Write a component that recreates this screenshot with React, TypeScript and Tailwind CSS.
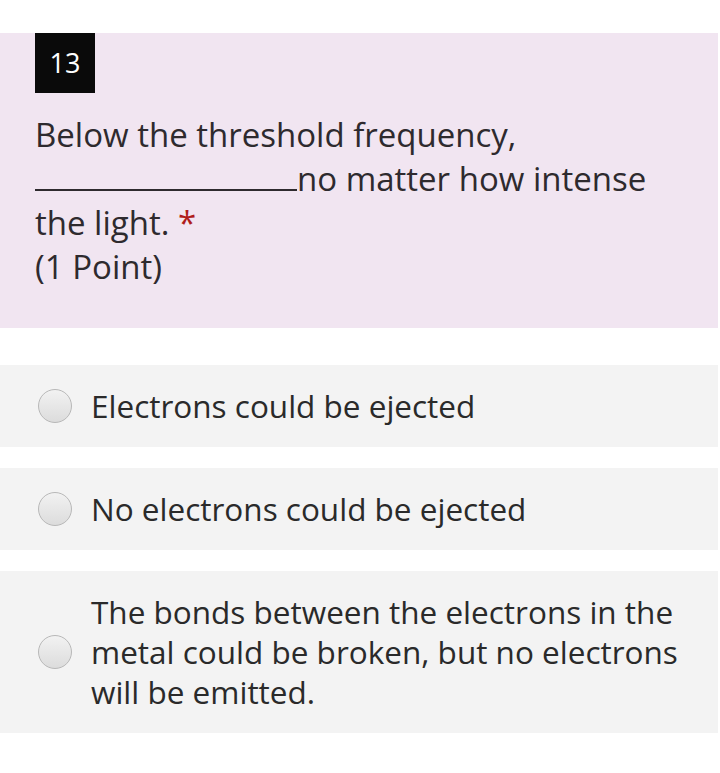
import React from "react";

const font = { fontFamily: '"Open Sans", "Noto Sans", sans-serif' };

function Radio() {
  return (
    <div className="w-[34px] h-[34px] shrink-0 rounded-full border border-[#b8b8b8] bg-gradient-to-b from-[#f2f2f2] to-[#dcdcdc]" />
  );
}

function Option({ children }: { children: React.ReactNode }) {
  return (
    <div className="flex items-center bg-[#f3f3f3] mr-[2px] pl-[38px] pr-4 py-[21px] gap-[19px]">
      <Radio />
      <div className="text-[31.5px] leading-[40px] text-[#2a2a2a] whitespace-nowrap">{children}</div>
    </div>
  );
}

export default function App() {
  return (
    <div className="bg-white w-[720px] h-[773px] pt-[33px]" style={font}>
      <div className="bg-[#f1e5f1] mr-[2px] h-[295px] pl-[35px] pr-4">
        <div className="w-[60px] h-[60px] bg-[#0a0a0a] text-white text-[27px] flex items-center justify-center">13</div>
        <div className="mt-[20px] text-[33px] leading-[44px] text-[#2e2a2e] whitespace-nowrap">
          <div>Below the threshold frequency,</div>
          <div>
            <span className="inline-block w-[262px] border-b-2 border-[#2e2a2e] align-baseline" style={{ height: 0 }} />
            no matter how intense
          </div>
          <div>
            the light. <span className="text-[#b01c1c]">*</span>
          </div>
          <div>(1 Point)</div>
        </div>
      </div>
      <div className="mt-[37px] flex flex-col gap-[21px]">
        <Option>Electrons could be ejected</Option>
        <Option>No electrons could be ejected</Option>
        <Option>
          The bonds between the electrons in the
          <br />
          metal could be broken, but no electrons
          <br />
          will be emitted.
        </Option>
      </div>
    </div>
  );
}
